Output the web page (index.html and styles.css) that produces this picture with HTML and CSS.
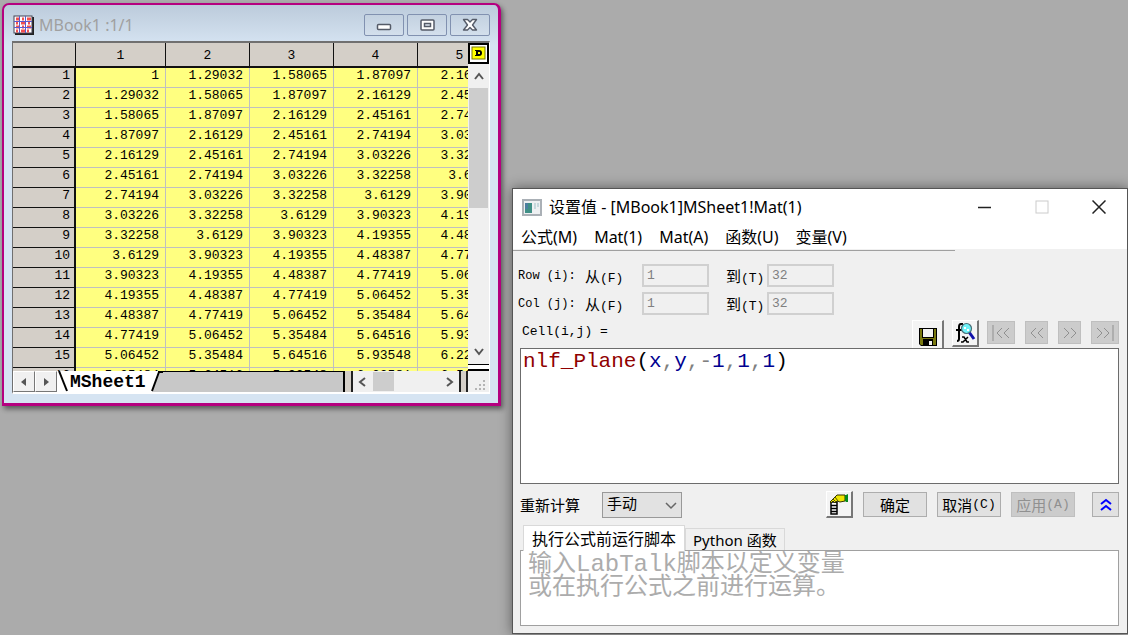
FILE: index.html
```html
<!DOCTYPE html>
<html lang="zh-CN">
<head>
<meta charset="utf-8">
<title>MBook1</title>
<link rel="stylesheet" href="styles.css">
</head>
<body>
<main class="desktop">
  <section class="book">
    <header class="book-title">
      <svg class="book-icon" width="21" height="20" viewBox="0 0 21 20">
        <path d="M2 19h18V2" fill="none" stroke="#222" stroke-width="2"/>
        <rect x="1" y="1" width="18" height="17" fill="#fff" stroke="#445" stroke-width="1"/>
        <path d="M3 4h3M9 4h2M14 4h4M3 8h2M8 8h4M15 8h2M3 12h3M9 12h2M14 12h4M3 16h2M8 16h4M14 16h2" stroke="#f05050" stroke-width="3"/>
        <path d="M6.500 1v17M12.500 1v17M1 6.500h18M1 12.500h18" stroke="#5a5ad0" stroke-width="1"/>
      </svg>
      <h1 class="book-name">MBook1 :1/1</h1>
      <div class="book-controls">
        <button class="book-btn" aria-label="Minimize"><svg width="18" height="16" viewBox="0 0 18 16"><rect x="2.500" y="7.500" width="13" height="5" rx="1" fill="#fff" stroke="#555b68" stroke-width="1.500"/></svg></button>
        <button class="book-btn" aria-label="Maximize"><svg width="18" height="16" viewBox="0 0 18 16"><rect x="3" y="3" width="13" height="10" rx="1" fill="#fff" stroke="#555b68" stroke-width="1.500"/><rect x="6.500" y="6.500" width="6" height="3" fill="#dbe5f0" stroke="#555b68" stroke-width="1.500"/></svg></button>
        <button class="book-btn" aria-label="Close"><svg width="18" height="16" viewBox="0 0 18 16"><path d="M2.500 2.500h4L9 5l2.500-2.500h4L11.500 8l4 5h-4L9 10.500 6.500 13h-4l4-5z" fill="#fff" stroke="#555b68" stroke-width="1.400" stroke-linejoin="round"/></svg></button>
      </div>
    </header>
    <div class="sheet">
      <div class="sheet-body">
        <div class="grid-view">
          <table class="grid">
            <colgroup><col class="c-head"><col class="c-first"><col class="c-data"><col class="c-data"><col class="c-data"><col class="c-data"></colgroup>
            <thead><tr><th></th><th>1</th><th>2</th><th>3</th><th>4</th><th>5</th></tr></thead>
            <tbody id="cells"></tbody>
          </table>
        </div>
        <div class="vbar">
          <button class="d-btn" aria-label="Data"><svg width="17" height="17" viewBox="0 0 17 17"><rect x="2" y="2" width="13" height="12" fill="#ff0" stroke="#77770a" stroke-width="1"/><path d="M5 5h4q3 0 3 3t-3 3H5v-1h1V6H5z" fill="#000"/><rect x="8" y="7" width="2" height="2" fill="#ff0"/></svg></button>
          <button class="arrow" aria-label="Up"><svg width="12" height="12" viewBox="0 0 12 12"><path d="M2 9l4-5 4 5" fill="none" stroke="#555" stroke-width="2"/></svg></button>
          <div class="vthumb"></div>
          <button class="arrow arrow-end" aria-label="Down"><svg width="12" height="12" viewBox="0 0 12 12"><path d="M2 3l4 5 4-5" fill="none" stroke="#555" stroke-width="2"/></svg></button>
          <div class="split"></div>
        </div>
      </div>
      <div class="sheet-foot">
        <button class="nav" aria-label="Previous sheet"><svg width="8" height="10" viewBox="0 0 8 10"><path d="M6 1v8L1 5z" fill="#555"/></svg></button>
        <button class="nav" aria-label="Next sheet"><svg width="8" height="10" viewBox="0 0 8 10"><path d="M2 1v8l5-4z" fill="#555"/></svg></button>
        <button class="tab"><svg width="12" height="21" viewBox="0 0 12 21"><path d="M2 0l8 20" stroke="#000" stroke-width="2"/></svg><span>MSheet1</span><svg class="slant" width="14" height="21" viewBox="0 0 14 21"><path d="M11 0h3v21H3z" fill="#c8c8c8"/><path d="M10 1L3 20M9 1h5" stroke="#000" stroke-width="2"/></svg></button>
        <div class="tab-rest"></div>
        <div class="hbar">
          <button class="arrow" aria-label="Left"><svg width="12" height="12" viewBox="0 0 12 12"><path d="M8 2L3 6l5 4" fill="none" stroke="#555" stroke-width="2"/></svg></button>
          <div class="hthumb"></div>
          <button class="arrow arrow-right" aria-label="Right"><svg width="12" height="12" viewBox="0 0 12 12"><path d="M4 2l5 4-5 4" fill="none" stroke="#555" stroke-width="2"/></svg></button>
        </div>
        <div class="corner"><svg width="12" height="12" viewBox="0 0 12 12" fill="#b4b4b4"><path d="M8 0h2v2H8zM8 4h2v2H8zM4 4h2v2H4zM8 8h2v2H8zM4 8h2v2H4zM0 8h2v2H0z"/></svg></div>
      </div>
    </div>
  </section>

  <section class="dialog">
    <header class="dlg-title">
      <svg width="20" height="17" viewBox="0 0 20 17"><rect x="1" y="1" width="18" height="15" fill="#eef0f2" stroke="#aab0b6" stroke-width="2"/><rect x="3" y="4" width="7" height="10" fill="#3f8f86"/><path d="M3 4h3v6H3z" fill="#4c7f9f"/><path d="M12 4h2v6h-2zM15 4h2v4h-2z" fill="#c6d8dc"/></svg>
      <h2 class="dlg-name">设置值 - [MBook1]MSheet1!Mat(1)</h2>
      <button class="win-btn" aria-label="最小化"><svg width="14" height="14" viewBox="0 0 14 14"><path d="M0 7.500h13" stroke="#222" stroke-width="1.500"/></svg></button>
      <button class="win-btn" aria-label="最大化" disabled><svg width="14" height="14" viewBox="0 0 14 14"><rect x="1" y="1" width="12" height="12" fill="none" stroke="#ccc"/></svg></button>
      <button class="win-btn" aria-label="关闭"><svg width="14" height="14" viewBox="0 0 14 14"><path d="M.5.500l13 13M13.500.500l-13 13" stroke="#222" stroke-width="1.500"/></svg></button>
    </header>
    <nav class="menu">
      <button>公式(M)</button><button>Mat(1)</button><button>Mat(A)</button><button>函数(U)</button><button>变量(V)</button>
    </nav>
    <div class="menu-line"></div>
    <div class="dlg-body">
      <div class="range">
        <span>Row (i):</span><label for="rf"><b>从</b>(F)</label><input id="rf" value="1" disabled>
        <label class="to" for="rt"><b>到</b>(T)</label><input id="rt" value="32" disabled>
        <span>Col (j):</span><label for="cf"><b>从</b>(F)</label><input id="cf" value="1" disabled>
        <label class="to" for="ct"><b>到</b>(T)</label><input id="ct" value="32" disabled>
      </div>
      <div class="cell-row">
        <span class="cell-label" id="cell-label">Cell(i,j) =</span>
        <button class="tool tool-save" aria-label="保存"><svg width="18" height="18" viewBox="0 0 18 18"><path d="M0 0h18v18H2l-2-2z" fill="#000"/><path d="M1 1h16v16H2l-1-1z" fill="#7a7a10"/><path d="M3 0h12v10H3z" fill="#000"/><path d="M4 1h10v8H4z" fill="#f4f4f4"/><path d="M4 11h10v7H4z" fill="#000"/><path d="M10 13h3v4h-3z" fill="#f4f4f4"/></svg></button>
        <button class="tool tool-fx" aria-label="搜索函数"><svg width="22" height="22" viewBox="0 0 22 22"><path d="M9 2H7Q5 2 5 5v12q0 2-2 2M2 8h6" fill="none" stroke="#000" stroke-width="2"/><path d="M8 15h2l3 5h2M14 15l-5 5H7" fill="none" stroke="#000" stroke-width="1.500"/><path d="M15 10l5 7" stroke="#11a" stroke-width="3"/><circle cx="12.500" cy="6.500" r="5" fill="#6ef3f8" stroke="#4a6f78" stroke-width="1.200"/><path d="M10 5h2v2h-2zM13 7h2v2h-2z" fill="#fff"/></svg></button>
        <button class="step step-wide" aria-label="第一个" disabled><svg width="20" height="16" viewBox="0 0 20 16"><path d="M2 0v16M11 3L6 8l5 5M18 3l-5 5 5 5"/></svg></button>
        <button class="step" aria-label="上一个" disabled><svg width="16" height="16" viewBox="0 0 16 16"><path d="M7 3L2 8l5 5M14 3L9 8l5 5"/></svg></button>
        <button class="step" aria-label="下一个" disabled><svg width="16" height="16" viewBox="0 0 16 16"><path d="M2 3l5 5-5 5M9 3l5 5-5 5"/></svg></button>
        <button class="step step-wide" aria-label="最后一个" disabled><svg width="20" height="16" viewBox="0 0 20 16"><path d="M18 0v16M2 3l5 5-5 5M9 3l5 5-5 5"/></svg></button>
      </div>
      <div class="editor" role="textbox" contenteditable="true" aria-labelledby="cell-label" spellcheck="false"><span class="fn">nlf_Plane</span>(<span class="id">x</span><span class="op">,</span><span class="id">y</span><span class="op">,-</span><span class="id">1</span><span class="op">,</span><span class="id">1</span><span class="op">,</span><span class="id">1</span>)</div>
      <div class="actions">
        <label for="recalc">重新计算</label>
        <div class="pick"><select id="recalc"><option>手动</option></select><svg width="12" height="8" viewBox="0 0 12 8"><path d="M1 1l5 5 5-5" fill="none" stroke="#666" stroke-width="1.500"/></svg></div>
        <button class="tool tool-hand" aria-label="选择"><svg width="22" height="22" viewBox="0 0 22 22"><path d="M3 9h6v12H3z" fill="#fff" stroke="#000" stroke-width="1.500"/><path d="M3 12.500h6M3 15.500h6M3 18.500h6" stroke="#000" stroke-width="1.500"/><path d="M2 9l7-7h8v6l-5 1-3-1-2 2-2-2-2 2z" fill="#eee600" stroke="#333300"/><path d="M7 4l3 4M5 6l3 3" stroke="#555500"/><path d="M17 2h1l2-1v8h-2l-1-1z" fill="#078a1d"/></svg></button>
        <button class="push">确定</button>
        <button class="push">取消<i>(C)</i></button>
        <button class="push" disabled>应用<i>(A)</i></button>
        <button class="push push-fold" aria-label="折叠"><svg width="12" height="14" viewBox="0 0 12 14"><path d="M1 6l5-4 5 4M1 12l5-4 5 4" fill="none" stroke="#00f" stroke-width="2"/></svg></button>
      </div>
      <div class="tabs" role="tablist">
        <button class="page-tab page-tab-on" role="tab" aria-selected="true">执行公式前运行脚本</button>
        <button class="page-tab" role="tab" aria-selected="false">Python 函数</button>
      </div>
      <textarea class="script" aria-label="脚本" placeholder="输入LabTalk脚本以定义变量&#10;或在执行公式之前进行运算。"></textarea>
    </div>
  </section>
</main>
<script src="grid.js"></script>
</body>
</html>
```
FILE: grid.js
```js
// Plane surface: z = 1 + (row + col) * 9/31, up to five decimals.
const body = document.getElementById("cells");
for (let r = 0; r < 16; r++) {
  const tr = body.insertRow();
  const th = document.createElement("th");
  th.textContent = r + 1;
  tr.append(th);
  for (let c = 0; c < 5; c++) {
    const value = 1 + (r + c) * 9 / 31;
    tr.insertCell().textContent = String(Number(value.toFixed(5)));
  }
}
```
FILE: styles.css
```css
* { box-sizing: border-box; }
body { margin: 0; background: #ababab; color: #000; }
button { padding: 0; border: 0; background: none; color: inherit; font: inherit; display: flex; align-items: center; justify-content: center; }
svg { display: block; flex: none; }
.desktop { position: relative; min-height: 100vh; overflow: hidden; }

.book {
  position: absolute; left: 2px; top: 3px; width: 499px;
  padding: 0 8px 9px;
  border: solid #b5007f; border-width: 2px 3px 3px 2px; border-radius: 7px 7px 0 0;
  background: linear-gradient(#bccbdb, #d6e4f2 40px);
  box-shadow: 2px 3px 5px #0007;
}
.book-title { display: flex; align-items: center; height: 36px; padding: 4px 0 0 1px; }
.book-name { flex: 1; margin: 0 0 0 5px; font: 400 16px "Noto Sans", sans-serif; color: #a0a0a0; }
.book-controls { display: flex; gap: 3px; }
.book-btn { width: 40px; height: 22px; border: 1px solid #8191b0; border-radius: 2px; background: linear-gradient(#c3d1e0, #d3dfec); }
.sheet { border: solid; border-width: 2px 1px 2px 1px; border-color: #707070 #fff #fff #707070; background: #f0f0f0; }
.sheet-body { display: flex; }
.grid-view { flex: 1; height: 328px; overflow: hidden; }
.grid { width: 489px; table-layout: fixed; border-collapse: separate; border-spacing: 0; font: 13px/16px "Liberation Mono", monospace; }
.c-head { width: 63px; }
.c-first { width: 90px; }
.c-data { width: 84px; }
.grid th { font-weight: 400; background: #d4cfc8; border: solid #111; border-width: 0 1px 1px 0; padding: 0; }
.grid thead th { height: 25px; padding-top: 3px; border-bottom-width: 2px; }
.grid tbody th, .grid td { height: 20px; padding: 0 6px 3px 0; text-align: right; }
.grid tbody th { border-right-width: 2px; padding-right: 4px; }
.grid td { background: #ffff80; border: solid #c0c0c0; border-width: 0 1px 1px 0; }
.vbar { display: flex; flex-direction: column; width: 21px; background: #f0f0f0; }
.d-btn { height: 21px; border: 2px solid #000; background: #fff; }
.arrow { height: 24px; }
.vthumb { height: 120px; margin: 0 1px; background: #cdcdcd; }
.arrow-end { margin-top: auto; }
.split { height: 7px; background: #fff; border: solid #000; border-width: 1px 0 2px; }
.sheet-foot { display: flex; height: 21px; background: #d4cfc8; }
.nav { width: 22px; background: #f0f0f0; border: 1px solid; border-color: #fff #777 #777 #fff; }
.tab { align-items: stretch; background: #fff; font: 700 18px/22px "Liberation Mono", monospace; }
.tab span { padding: 0 3px 0 1px; }
.tab-rest { flex: 1; margin-right: 6px; background: #c8c8c8; border: solid #000; border-width: 1px 2px 0 0; }
.hbar { display: flex; align-items: stretch; width: 110px; background: #f0f0f0; border: solid #222; border-width: 0 2px; }
.hbar .arrow { width: 20px; height: 21px; }
.hthumb { width: 21px; margin: 1px 0; background: #cdcdcd; }
.arrow-right { margin-left: auto; }
.corner { display: flex; align-items: flex-end; justify-content: flex-end; width: 23px; margin-left: 5px; padding: 0 2px 0 0; background: #f0f0f0; border-left: 2px solid #222; }

.dialog {
  position: absolute; left: 512px; top: 188px; right: 0;
  padding-bottom: 7px;
  border: 1px solid #555; background: #f0f0f0; box-shadow: 0 0 12px #0007;
  font: 12px "Liberation Mono", "Noto Sans CJK SC", monospace;
}
.dlg-title { display: flex; align-items: center; height: 36px; padding-left: 9px; background: #fff; }
.dlg-name { flex: 1; margin: 0 0 0 7px; font: 400 16px/20px "Noto Sans", "Noto Sans CJK SC", sans-serif; }
.win-btn { width: 57px; height: 36px; }
.menu { display: flex; gap: 17px; height: 24px; padding: 0 8px; background: #fff; font: 16px/24px "Noto Sans", "Noto Sans CJK SC", sans-serif; }
.menu-line { width: 72%; height: 4px; margin-top: 1px; border-top: 1px solid #a0a0a0; }
.dlg-body { padding: 10px 8px 0 7px; }
.range { display: grid; grid-template-columns: 67px 57px 67px 58px 67px; row-gap: 5px; align-items: center; margin-left: -2px; font-size: 12px; }
.range label { font-size: 13px; white-space: nowrap; }
.range b { font-weight: 400; font-size: 15px; }
.range .to { padding-left: 17px; }
.range input { width: 100%; height: 23px; padding: 0 3px; border: 2px solid #d0d0d0; background: #f0f0f0; color: #808080; font: 13px "Liberation Mono", monospace; }
.cell-row { display: flex; align-items: flex-start; height: 33px; padding-top: 5px; }
.cell-label { flex: 1; padding-left: 2px; line-height: 24px; font-size: 13px; }
.tool { border: solid; border-width: 1px 2px 2px 1px; border-color: #fff #777 #777 #fff; background: #f4f4f4; width: 27px; height: 27px; }
.tool-save { width: 32px; height: 28px; border-bottom: 0; padding-top: 4px; }
.tool-fx { margin: 0 8px; }
.step { width: 23px; height: 23px; margin: 1px 10px 0 0; background: #ccc; border: 1px solid #bfbfbf; }
.step-wide { width: 28px; }
.step:last-child { margin-right: 0; }
.step path { fill: none; stroke: #909090; stroke-width: 1; }
.editor { height: 136px; padding: 1px 2px; border: 1px solid #6c6c6c; background: #fff; font: 21px/24px "Liberation Mono", monospace; outline: 0; }
.fn { color: #900000; }
.id { color: #000090; }
.op { color: #808080; }
.actions { display: flex; align-items: center; height: 27px; margin-top: 7px; font-size: 15px; }
.pick { position: relative; width: 80px; margin: 0 auto 0 22px; }
.pick select { width: 100%; height: 26px; padding: 2px 4px 0; appearance: none; border: 1px solid #999; border-radius: 0; background: #e2e2e2; color: #000; font: inherit; }
.pick svg { position: absolute; right: 5px; top: 10px; pointer-events: none; }
.push { width: 64px; height: 25px; margin-left: 10px; background: #e1e1e1; border: 1px solid #adadad; }
.push i { font-style: normal; font-size: 13px; }
.push:disabled { background: #ccc; border-color: #bfbfbf; color: #909090; }
.push-fold { width: 27px; margin-left: 17px; }
.tabs { display: flex; align-items: flex-end; height: 32px; padding-left: 3px; font: 15px/20px "Noto Sans", "Noto Sans CJK SC", sans-serif; }
.page-tab { height: 22px; padding: 0 7px; border: 1px solid #d9d9d9; border-bottom: 0; }
.page-tab-on { position: relative; height: 26px; margin-bottom: -1px; padding: 0 8px; background: #fff; font-size: 16px; }
.script { display: block; width: 100%; height: 76px; padding: 2px 7px 0; border: 1px solid #a0a0a0; border-radius: 0; background: #fff; resize: none; outline: 0; font: 24px/23px "Liberation Mono", "Noto Sans CJK SC", monospace; }
.script::placeholder { color: #acacac; }
```
